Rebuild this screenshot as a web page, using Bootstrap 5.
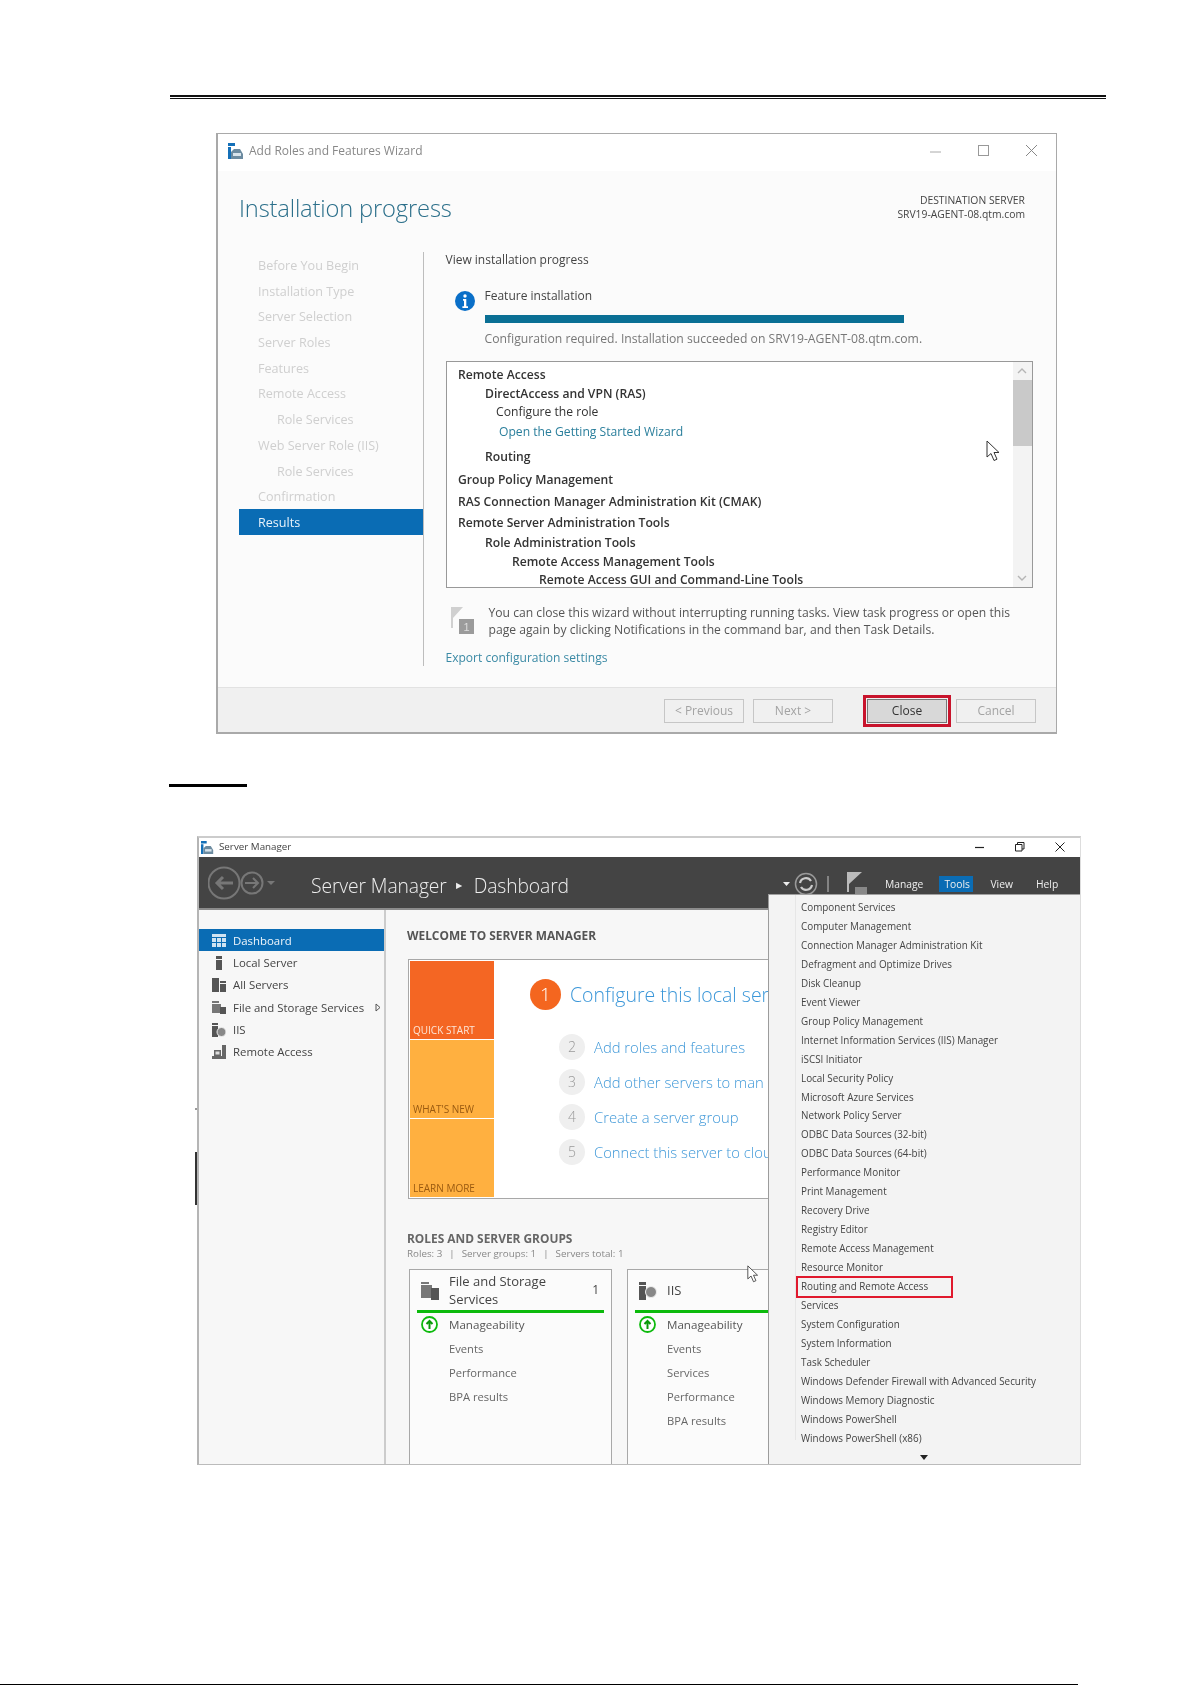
<!doctype html>
<html lang="en">
<head>
<meta charset="utf-8">
<title>Server Manager steps</title>
<link href="https://cdn.jsdelivr.net/npm/bootstrap@5.3.0/dist/css/bootstrap.min.css" rel="stylesheet">
<style>
html,body{background:#fff;margin:0}
body{font-family:"Open Sans","Liberation Sans",sans-serif;height:1685px;overflow:hidden;color:#333}
.page{padding-top:95px}
.head-rule{margin-left:170px;width:936px;height:4px;border-top:2px solid #111;border-bottom:1px solid #111}
/* wizard */
.wiz{margin:34px 0 0 216px;width:841px;height:601px;border:1px solid #a9a9a9;border-width:1px 1px 2px 2px;background:#fbfbfb;filter:blur(.3px)}
.wiz-title{height:37px;background:#fff;padding:0 0 4px 10px;font-size:12px;color:#888;gap:5px}
.winbtns{margin-left:auto;padding-right:17px;gap:34px}
.wiz-head{height:81px;padding:19px 31px 0 21px}
.wiz-h1{font-size:23.7px;font-weight:300;line-height:36px;color:#2b6f8a;letter-spacing:-.15px}
.wiz-dest{font-size:10.35px;line-height:14.3px;color:#444;text-align:right;padding-top:3px}
.wiz-body{height:414px}
.steps{width:184px;margin-left:21px;font-size:12.6px;color:#cfcfcf}
.stp{height:25.7px;line-height:27px;padding-left:19px}
.stp.sub{padding-left:38px}
.stp.on{background:#0a6cb4;color:#e8f2fa;height:26px}
.wiz-main{border-left:1px solid #bdbdbd;padding-left:21.5px;width:609px}
.t12{font-size:12px;line-height:16px;color:#444}
.feat{margin-top:19px}
.feat-ic{width:39px;padding-left:9px}
.feat-tx{height:18px;line-height:18px;font-size:12px;color:#444}
.pbar{margin-top:10px;height:8px;width:419px;background:#0a6f94}
.feat-note{margin-top:7px;height:18px;line-height:18px;font-size:12.2px;color:#777;white-space:nowrap}
.lbox{margin-top:13px;width:587px;height:227px;border:1px solid #999;background:#fff}
.lrows{padding:3.5px 0 0 11.5px;font-size:12.15px;font-weight:600;color:#333}
.lrow{height:18px;line-height:18px;white-space:nowrap}
.lrow:nth-child(2){margin-top:1.5px}.lrow:nth-child(3){margin-top:-.5px}.lrow:nth-child(4){margin-top:2px}
.lrow:nth-child(5){margin-top:7px}.lrow:nth-child(6){margin-top:5px}.lrow:nth-child(7){margin-top:4px}
.lrow:nth-child(8){margin-top:3px}.lrow:nth-child(9){margin-top:2px}.lrow:nth-child(10){margin-top:1px}
.in1{padding-left:27px}.in2{padding-left:38px;font-weight:400}.in2b{padding-left:54px}.in3{padding-left:81px}
.lrow.lnk{padding-left:41px;font-weight:400;color:#2b7f9c}
.sbar{width:19px;margin-left:auto;background:#f3f3f3}
.sb-btn{height:18px}
.sb-thumb{height:66px;background:#c9c9c9}
.nfy{margin-top:16px}
.nfy-ic{width:43px;padding:3px 0 0 5px}
.nfy-tx{font-size:12.15px;line-height:17px;color:#555;white-space:nowrap}
.exp{margin-top:10.5px;font-size:12.05px;line-height:18px;color:#3b8aa5}
.wiz-foot{height:45px;background:#f0f0f0;border-top:1px solid #e2e2e2;padding:11px 20px 0 0}
.wbtn{width:80px;height:24px;padding:0;border-radius:0;font-size:12px;line-height:22px;--bs-btn-border-color:#c6c6c6;--bs-btn-color:#a3a3a3;--bs-btn-bg:#f0f0f0;--bs-btn-disabled-opacity:1;--bs-btn-disabled-border-color:#c6c6c6;--bs-btn-disabled-color:#a3a3a3;--bs-btn-disabled-bg:#f0f0f0}
.wbtn.next{margin:0 34px 0 9px}
.wbtn.cancel{margin-left:9px}
.wbtn.close-b{--bs-btn-bg:#d8d8d8;--bs-btn-border-color:#777;--bs-btn-color:#333;outline:3px solid #c8142c;outline-offset:1px}
/* section mark */
.sec-mark{margin:50px 0 0 169px;width:78px;height:3px;background:#000}
/* server manager */
.sm-wrap{margin:49px 0 0 197px;width:884px;height:629px}
.sm{height:629px;border-top:2px solid #ccc;border-left:2px solid #b5b5b5;border-bottom:1px solid #bbb;border-right:1px solid #ddd;overflow:hidden;background:#f7f7f7;filter:blur(.3px)}
.sm-title{height:19px;background:#fff;font-size:9.8px;color:#444;padding-left:2px;gap:5px}
.sm-win{margin-left:auto;gap:28px;padding-right:14px}
.sm-bar{height:54px;background:#444;border-bottom:2px solid #8c8c8c}
.sm-nav{padding:9px 0 0 9px;width:112px}
.sm-crumb{font-size:19.3px;font-weight:300;color:#eee;padding-top:13px;line-height:30px;white-space:nowrap;letter-spacing:-.1px}
.sm-crumb .sep{font-size:8px;margin:0 12px 0 9px;vertical-align:5px}
.sm-tools{margin-left:auto;padding:15px 0 0 0;font-size:10.3px;color:#eee;position:relative;width:309px}
.mtab{height:16px;line-height:16px;margin-top:4px}
.mt-manage{margin-left:18px}
.mt-tools{margin-left:16px;background:#0a6cb4;padding:0 5px;width:34px}
.mt-view{margin-left:17px}
.mt-help{margin-left:23px}
.sm-content{height:554px}
.sm-side{width:187px;border-right:2px solid #ccc;padding-top:19px;flex:none;font-size:11.4px;color:#444}
.srow{height:22.3px;line-height:22px;padding:1px 0 0 13px;gap:7px;white-space:nowrap}
.srow.on{background:#0a6cb4;color:#eef5fb}
.srow svg{flex:none}
.sm-main{padding:16px 0 0 21px;width:700px;flex:none}
.cap{font-size:11.9px;font-weight:700;line-height:18px;color:#666;white-space:nowrap}
.cap-d{color:#555}
.qs{margin:15px 0 0 1px;width:362px;height:240px;border:1px solid #a8a8a8;border-right:0;background:#fff;padding:1px;overflow:hidden}
.tiles{width:84px;flex:none;gap:1px}
.tile{flex:1;padding:0 3px 1px;font-size:10px;line-height:16px;display:flex;align-items:flex-end;white-space:nowrap}
.t-o{background:#f46623;color:#fde6d8}
.t-y{background:#ffb040;color:#9a5a10}
.qsr{padding:18px 0 0 36px;white-space:nowrap}
.qs1{gap:9px;color:#3a96d8;font-size:19.5px;font-weight:300;line-height:31px}
.cir1{width:31px;height:31px;flex:none;border-radius:50%;background:#f4661f;color:#fff;text-align:center;font-size:19px;line-height:31px;font-weight:300}
.qsrows{margin:24px 0 0 29px;gap:9px}
.qs2{gap:9px;color:#3f98d8;font-size:14.8px;font-weight:300;line-height:26px}
.cir2{width:26px;height:26px;flex:none;border-radius:50%;background:#efefef;color:#999;text-align:center;font-size:14px;line-height:26px}
.roles{margin-top:30px}
.roles-sub{font-size:9.8px;line-height:14px;color:#888;white-space:nowrap}
.roles-sub i{font-style:normal;margin:0 7px}
.rcards{margin:8px 0 0 2px;gap:15px}
.rcard{width:203px;height:240px;border:1.5px solid #a8a8a8;background:#fbfbfb;flex:none}
.rcard.cut{width:141px;border-right:0;overflow:hidden}
.rc-head{height:40px;margin:0 8px;gap:7px;font-size:13px;line-height:18.5px;color:#444;white-space:nowrap}
.rc-head .ic{width:24px;flex:none;padding-left:3px}
.rc-n{margin-left:auto;padding-right:4px;font-size:12px}
.rc-line{height:2.5px;margin:0 7px;background:#0cba0c}
.rcard.cut .rc-line{margin-right:0}
.rc-row{height:24px;line-height:24px;padding-left:39px;font-size:11.2px;color:#666}
.rc-row.m{position:relative;color:#555;font-size:11.6px}
.rc-row.m svg{position:absolute;left:11px;top:3px}
/* tools menu */
.tmenu{position:absolute;left:569px;top:56px;right:0;bottom:0;background:#f3f3f3;border-left:1.5px solid #9c9c9c;border-top:1px solid #a0a0a0;padding-top:3px;font-size:9.9px;color:#444;z-index:3}
.tmenu::before{content:"";position:absolute;left:26px;top:0;height:545px;border-left:1px solid #e6e6e6}
.mi{height:18.96px;line-height:19px;padding-left:32px;white-space:nowrap;position:relative}
.mi.hit::after{content:"";position:absolute;left:27px;top:-1px;width:157px;height:22px;border:2px solid #e0192d}
.mi-more{padding-left:151px;height:10px;line-height:10px;margin-top:3px}
.cursor{position:absolute;z-index:4}
.sm-wrap,.wiz{position:relative}
.sm{position:relative}
.c1{left:768px;top:306px}
.c2{left:548px;top:427px}
.mark-b{position:absolute;left:-2px;width:2px;background:#333}
.mb1{top:316px;height:53px}
.mb2{top:272px;height:2px;background:#999}
.foot-rule{margin-top:219px;width:1078px;height:1px;background:#000}
</style>
</head>
<body>
<div class="page">
  <div class="head-rule"></div>

  <section class="wiz d-flex flex-column">
    <div class="wiz-title d-flex align-items-center">
      <svg width="16" height="16" viewBox="0 0 16 16"><path fill="#1470b8" d="M0 0h7v3H0zM0 4h3v12H0z"/><path fill="#6c8ba0" d="M3 9l3-3h6l3 5v5H3z"/><path fill="#d8e4ec" d="M5 10h8v3H5z"/></svg>
      <span>Add Roles and Features Wizard</span>
      <div class="winbtns d-flex align-items-center">
        <svg width="14" height="14" viewBox="0 0 14 14"><path stroke="#aaa" d="M1 8h11"/></svg>
        <svg width="14" height="14" viewBox="0 0 14 14"><rect x="1.5" y="1.5" width="10" height="10" fill="none" stroke="#999"/></svg>
        <svg width="14" height="14" viewBox="0 0 14 14"><path stroke="#888" d="M1 1l11 11M12 1L1 12"/></svg>
      </div>
    </div>
    <div class="wiz-head d-flex justify-content-between">
      <div class="wiz-h1">Installation progress</div>
      <div class="wiz-dest">DESTINATION SERVER<br>SRV19-AGENT-08.qtm.com</div>
    </div>
    <div class="wiz-body d-flex">
      <nav class="steps">
        <div class="stp">Before You Begin</div>
        <div class="stp">Installation Type</div>
        <div class="stp">Server Selection</div>
        <div class="stp">Server Roles</div>
        <div class="stp">Features</div>
        <div class="stp">Remote Access</div>
        <div class="stp sub">Role Services</div>
        <div class="stp">Web Server Role (IIS)</div>
        <div class="stp sub">Role Services</div>
        <div class="stp">Confirmation</div>
        <div class="stp on">Results</div>
      </nav>
      <div class="wiz-main">
        <div class="t12">View installation progress</div>
        <div class="feat d-flex">
          <div class="feat-ic"><svg width="20" height="20" viewBox="0 0 20 20"><circle cx="10" cy="10" r="10" fill="#0a6fc8"/><circle cx="10" cy="5" r="1.7" fill="#fff"/><path fill="#fff" d="M8 8h3.3v7.2H13V17H7.4v-1.8H9V9.8H8z"/></svg></div>
          <div>
            <div class="feat-tx">Feature installation</div>
            <div class="pbar"></div>
            <div class="feat-note">Configuration required. Installation succeeded on SRV19-AGENT-08.qtm.com.</div>
          </div>
        </div>
        <div class="lbox d-flex">
          <div class="lrows">
            <div class="lrow">Remote Access</div>
            <div class="lrow in1">DirectAccess and VPN (RAS)</div>
            <div class="lrow in2">Configure the role</div>
            <div class="lrow lnk">Open the Getting Started Wizard</div>
            <div class="lrow in1">Routing</div>
            <div class="lrow">Group Policy Management</div>
            <div class="lrow">RAS Connection Manager Administration Kit (CMAK)</div>
            <div class="lrow">Remote Server Administration Tools</div>
            <div class="lrow in1">Role Administration Tools</div>
            <div class="lrow in2b">Remote Access Management Tools</div>
            <div class="lrow in3">Remote Access GUI and Command-Line Tools</div>
          </div>
          <div class="sbar d-flex flex-column">
            <div class="sb-btn d-flex align-items-center justify-content-center"><svg width="10" height="6" viewBox="0 0 10 6"><path fill="none" stroke="#b5b5b5" stroke-width="1.4" d="M1 5l4-4 4 4"/></svg></div>
            <div class="sb-thumb"></div>
            <div class="sb-btn mt-auto d-flex align-items-center justify-content-center"><svg width="10" height="6" viewBox="0 0 10 6"><path fill="none" stroke="#b5b5b5" stroke-width="1.4" d="M1 1l4 4 4-4"/></svg></div>
          </div>
        </div>
        <div class="nfy d-flex">
          <div class="nfy-ic"><svg width="23" height="28" viewBox="0 0 23 28"><path fill="#d0d0d0" d="M0 0h2v21H0zM2 0h10L2 11z"/><rect x="8" y="12" width="15" height="15" fill="#9b9b9b"/><text x="12.5" y="24" font-size="11" fill="#ddd" font-family="Liberation Sans">1</text></svg></div>
          <div class="nfy-tx">You can close this wizard without interrupting running tasks. View task progress or open this<br>page again by clicking Notifications in the command bar, and then Task Details.</div>
        </div>
        <div class="exp">Export configuration settings</div>
      </div>
    </div>
    <div class="wiz-foot d-flex justify-content-end mt-auto">
      <button class="btn wbtn" disabled>&lt; Previous</button>
      <button class="btn wbtn next" disabled>Next &gt;</button>
      <button class="btn wbtn close-b">Close</button>
      <button class="btn wbtn cancel" disabled>Cancel</button>
    </div>
    <svg class="cursor c1" width="16" height="22" viewBox="0 0 16 22"><path fill="#fff" stroke="#333" d="M1 1v16l4-3.5 3 7 3-1.3-3-6.7h5z"/></svg>
  </section>

  <div class="sec-mark"></div>

  <section class="sm-wrap">
    <span class="mark-b mb1"></span><span class="mark-b mb2"></span>
    <div class="sm d-flex flex-column">
      <div class="sm-title d-flex align-items-center">
        <svg width="13" height="13" viewBox="0 0 16 16"><path fill="#1470b8" d="M0 0h7v3H0zM0 4h3v12H0z"/><path fill="#6c8ba0" d="M3 9l3-3h6l3 5v5H3z"/><path fill="#d8e4ec" d="M5 10h8v3H5z"/></svg>
        <span>Server Manager</span>
        <div class="sm-win d-flex align-items-center">
          <svg width="12" height="12" viewBox="0 0 12 12"><path stroke="#222" stroke-width="1.2" d="M1 6.5h9"/></svg>
          <svg width="12" height="12" viewBox="0 0 12 12"><path fill="none" stroke="#222" d="M1.500 3.500h6.500v6.500H1.500zM3.500 3.500V1.500H10v6.500H8"/></svg>
          <svg width="12" height="12" viewBox="0 0 12 12"><path stroke="#222" d="M1.500 1.500l9 9M10.500 1.500l-9 9"/></svg>
        </div>
      </div>
      <div class="sm-bar d-flex">
        <div class="sm-nav">
          <svg width="92" height="34" viewBox="0 0 92 34"><g fill="none" stroke="#777" stroke-width="2"><circle cx="16" cy="17" r="15.500"/><circle cx="44" cy="17" r="10.500"/><path stroke-width="3" d="M25 17H9m6-6l-6 6 6 6"/><path stroke-width="2" d="M37 17h13m-5-5l5 5-5 5"/></g><path fill="#777" d="M59 15h8l-4 4z"/></svg>
        </div>
        <div class="sm-crumb">Server Manager<span class="sep">&#9654;</span>Dashboard</div>
        <div class="sm-tools d-flex">
          <svg class="flex-none" width="96" height="24" viewBox="0 0 96 24"><path fill="#eee" d="M12 10h7l-3.500 4z"/><circle cx="35" cy="12" r="10.500" fill="none" stroke="#999" stroke-width="1.500"/><path fill="none" stroke="#ccc" stroke-width="2.200" d="M29 11a6 6 0 0 1 11-2M41 13a6 6 0 0 1-11 2"/><path stroke="#999" stroke-width="1.500" d="M57 4v16"/><path fill="#bbb" d="M76 0h2v20h-2zM78 0h13l-13 12z"/><rect x="84" y="15" width="12" height="9" fill="#888"/></svg>
          <span class="mtab mt-manage">Manage</span><span class="mtab mt-tools">Tools</span><span class="mtab mt-view">View</span><span class="mtab mt-help">Help</span>
        </div>
      </div>
      <div class="sm-content d-flex">
        <aside class="sm-side">
          <div class="srow on d-flex align-items-center"><svg width="14" height="13" viewBox="0 0 14 13"><path fill="#cfe3f2" d="M0 0h14v3H0zM0 4h4v4H0zM5 4h4v4H5zM10 4h4v4h-4zM0 9h4v4H0zM5 9h4v4H5zM10 9h4v4h-4z"/></svg><span>Dashboard</span></div>
          <div class="srow d-flex align-items-center"><svg width="14" height="14" viewBox="0 0 14 14"><path fill="#555" d="M4 0h6v3H4zM4 4h6v10H4z"/></svg><span>Local Server</span></div>
          <div class="srow d-flex align-items-center"><svg width="14" height="14" viewBox="0 0 14 14"><path fill="#555" d="M0 0h7v14H0zM8 3h6v2H8zM8 6h6v8H8z"/></svg><span>All Servers</span></div>
          <div class="srow d-flex align-items-center"><svg width="14" height="14" viewBox="0 0 14 14"><path fill="#777" d="M0 0h7v2H0zM0 3h9v9H0z"/><path fill="#555" d="M8 6h6v7H8z"/></svg><span>File and Storage Services</span><svg class="ms-1" width="6" height="9" viewBox="0 0 6 9"><path fill="none" stroke="#555" d="M1 1l4 3.500-4 3.500z"/></svg></div>
          <div class="srow d-flex align-items-center"><svg width="14" height="14" viewBox="0 0 14 14"><path fill="#555" d="M0 0h6v2H0zM0 3h6v11H0z"/><circle cx="9.500" cy="9" r="4.500" fill="#888" stroke="#eee"/></svg><span>IIS</span></div>
          <div class="srow d-flex align-items-center"><svg width="14" height="14" viewBox="0 0 14 14"><path fill="#666" d="M10 0h4v14h-4zM2 5h7v6H2zM0 11h10v3H0z"/><path fill="#ddd" d="M3.500 6.500h4v3h-4z"/></svg><span>Remote Access</span></div>
        </aside>
        <main class="sm-main">
          <div class="cap cap-d">WELCOME TO SERVER MANAGER</div>
          <div class="qs d-flex">
            <div class="tiles d-flex flex-column">
              <div class="tile t-o">QUICK START</div>
              <div class="tile t-y">WHAT'S NEW</div>
              <div class="tile t-y">LEARN MORE</div>
            </div>
            <div class="qsr">
              <div class="qs1 d-flex"><span class="cir1">1</span><span>Configure this local ser</span></div>
              <div class="qsrows d-flex flex-column">
                <div class="qs2 d-flex"><span class="cir2">2</span><span>Add roles and features</span></div>
                <div class="qs2 d-flex"><span class="cir2">3</span><span>Add other servers to man</span></div>
                <div class="qs2 d-flex"><span class="cir2">4</span><span>Create a server group</span></div>
                <div class="qs2 d-flex"><span class="cir2">5</span><span>Connect this server to clou</span></div>
              </div>
            </div>
          </div>
          <div class="cap roles">ROLES AND SERVER GROUPS</div>
          <div class="roles-sub">Roles: 3<i>|</i>Server groups: 1<i>|</i>Servers total: 1</div>
          <div class="rcards d-flex">
            <div class="rcard">
              <div class="rc-head d-flex align-items-center">
                <div class="ic"><svg width="18" height="18" viewBox="0 0 18 18"><path fill="#777" d="M0 0h8v2H0zM0 3h11v13H0z"/><path fill="#555" d="M10 6h8v12h-8z"/></svg></div>
                <div>File and Storage<br>Services</div>
                <div class="rc-n">1</div>
              </div>
              <div class="rc-line"></div>
              <div class="rc-row m"><svg width="17" height="17" viewBox="0 0 17 17"><circle cx="8.500" cy="8.500" r="7.500" fill="#fff" stroke="#0cba0c" stroke-width="1.800"/><path fill="none" stroke="#0a9a0a" stroke-width="2" d="M8.500 13V5M5.500 8l3-3 3 3"/></svg>Manageability</div>
              <div class="rc-row">Events</div>
              <div class="rc-row">Performance</div>
              <div class="rc-row">BPA results</div>
            </div>
            <div class="rcard cut">
              <div class="rc-head d-flex align-items-center">
                <div class="ic"><svg width="18" height="18" viewBox="0 0 18 18"><path fill="#555" d="M0 0h7v3H0zM0 4h7v14H0z"/><circle cx="12" cy="10" r="5.500" fill="#888" stroke="#eee"/></svg></div>
                <div>IIS</div>
              </div>
              <div class="rc-line"></div>
              <div class="rc-row m"><svg width="17" height="17" viewBox="0 0 17 17"><circle cx="8.500" cy="8.500" r="7.500" fill="#fff" stroke="#0cba0c" stroke-width="1.800"/><path fill="none" stroke="#0a9a0a" stroke-width="2" d="M8.500 13V5M5.500 8l3-3 3 3"/></svg>Manageability</div>
              <div class="rc-row">Events</div>
              <div class="rc-row">Services</div>
              <div class="rc-row">Performance</div>
              <div class="rc-row">BPA results</div>
            </div>
          </div>
        </main>
      </div>
      <div class="tmenu">
        <div class="mi">Component Services</div>
        <div class="mi">Computer Management</div>
        <div class="mi">Connection Manager Administration Kit</div>
        <div class="mi">Defragment and Optimize Drives</div>
        <div class="mi">Disk Cleanup</div>
        <div class="mi">Event Viewer</div>
        <div class="mi">Group Policy Management</div>
        <div class="mi">Internet Information Services (IIS) Manager</div>
        <div class="mi">iSCSI Initiator</div>
        <div class="mi">Local Security Policy</div>
        <div class="mi">Microsoft Azure Services</div>
        <div class="mi">Network Policy Server</div>
        <div class="mi">ODBC Data Sources (32-bit)</div>
        <div class="mi">ODBC Data Sources (64-bit)</div>
        <div class="mi">Performance Monitor</div>
        <div class="mi">Print Management</div>
        <div class="mi">Recovery Drive</div>
        <div class="mi">Registry Editor</div>
        <div class="mi">Remote Access Management</div>
        <div class="mi">Resource Monitor</div>
        <div class="mi hit">Routing and Remote Access</div>
        <div class="mi">Services</div>
        <div class="mi">System Configuration</div>
        <div class="mi">System Information</div>
        <div class="mi">Task Scheduler</div>
        <div class="mi">Windows Defender Firewall with Advanced Security</div>
        <div class="mi">Windows Memory Diagnostic</div>
        <div class="mi">Windows PowerShell</div>
        <div class="mi">Windows PowerShell (x86)</div>
        <div class="mi-more"><svg width="8" height="5" viewBox="0 0 8 5"><path fill="#222" d="M0 0h8L4 5z"/></svg></div>
      </div>
      <svg class="cursor c2" width="13" height="18" viewBox="0 0 16 22"><path fill="#fff" stroke="#333" d="M1 1v16l4-3.500 3 7 3-1.300-3-6.700h5z"/></svg>
    </div>
  </section>

  <div class="foot-rule"></div>
</div>
</body>
</html>
